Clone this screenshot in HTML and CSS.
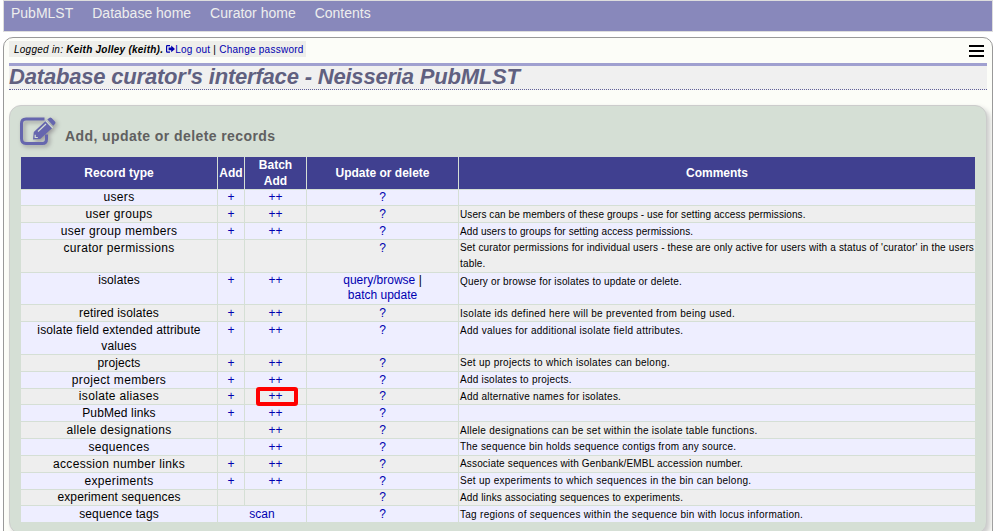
FILE: index.html
```
<!DOCTYPE html>
<html lang="en">
<head>
<meta charset="utf-8">
<title>Database curator's interface</title>
<link rel="stylesheet" href="styles.css">
</head>
<body>
<nav class="nav"><a>PubMLST</a><a>Database home</a><a>Curator home</a><a>Contents</a></nav>
<main class="page">
  <div class="topline">
    <div class="login"><i>Logged in: <b>Keith Jolley (keith).</b></i>
      <a><svg class="exit" viewBox="0 0 9 8"><path d="M4 .7H1.2Q.6.7.6 1.3v5.2q0 .6.6.6H4" fill="none" stroke="#0000b0" stroke-width="1.2"/><path d="M2.6 2.6h2.6V.6L9 3.9 5.2 7.2V5.2H2.6z" fill="#0000b0"/></svg>Log out</a> | <a>Change password</a></div>
    <div class="menu"><span></span><span></span><span></span></div>
  </div>
  <h1>Database curator's interface - Neisseria PubMLST</h1>
  <section class="box">
    <header class="heading">
      <svg class="edit" viewBox="0 0 36 30"><path d="M24.5 2H6Q1.5 2 1.5 6.500v15Q1.500 26.500 6 26.500h16.500Q26.500 26.500 26.500 22v-4.500" fill="none" stroke="#6666ae" stroke-width="3"/><path d="M13 22.500l.8-7.500L26.200 3.600l6.600 6.800L20.200 22z" fill="#6666ae"/><path d="M27.300 2.600L29.200.9q1.200-1 2.400.2l3.300 3.400q1.200 1.300 0 2.500l-1.600 1.700z" fill="#6666ae"/><path d="M25.800 3.900l6.900 7.100M18 14.500l8-7.500M15.200 17.800v2.700h2.600" fill="none" stroke="#d5dfd5" stroke-width="1.200"/></svg>
      <h2>Add, update or delete records</h2>
    </header>
    <table>
      <colgroup><col class="c-type"><col class="c-add"><col class="c-batch"><col class="c-update"><col></colgroup>
      <tr class="head"><th>Record type</th><th>Add</th><th>Batch<br>Add</th><th>Update or delete</th><th>Comments</th></tr>
      <tr class="short"><td>users</td><td><a>+</a></td><td><a>++</a></td><td><a>?</a></td><td></td></tr>
      <tr class="low"><td>user groups</td><td><a>+</a></td><td><a>++</a></td><td><a>?</a></td><td class="s1">Users can be members of these groups - use for setting access permissions.</td></tr>
      <tr class="low"><td>user group members</td><td><a>+</a></td><td><a>++</a></td><td><a>?</a></td><td class="s1">Add users to groups for setting access permissions.</td></tr>
      <tr class="tall"><td>curator permissions</td><td></td><td></td><td><a>?</a></td><td class="s2">Set curator permissions for individual users - these are only active for users with a status of 'curator' in the users<br>table.</td></tr>
      <tr class="medium low"><td class="narrow">isolates</td><td><a>+</a></td><td><a>++</a></td><td><a>query/browse</a> |<br><a>batch update</a></td><td class="s2">Query or browse for isolates to update or delete.</td></tr>
      <tr class="low"><td class="narrow">retired isolates</td><td><a>+</a></td><td><a>++</a></td><td><a>?</a></td><td class="s4">Isolate ids defined here will be prevented from being used.</td></tr>
      <tr class="tall low"><td class="narrow">isolate field extended attribute<br>values</td><td><a>+</a></td><td><a>++</a></td><td><a>?</a></td><td class="s4">Add values for additional isolate field attributes.</td></tr>
      <tr><td class="narrow">projects</td><td><a>+</a></td><td><a>++</a></td><td><a>?</a></td><td class="s4">Set up projects to which isolates can belong.</td></tr>
      <tr><td>project members</td><td><a>+</a></td><td><a>++</a></td><td><a>?</a></td><td class="s3">Add isolates to projects.</td></tr>
      <tr class="short"><td>isolate aliases</td><td><a>+</a></td><td class="marked"><a>++</a></td><td><a>?</a></td><td class="s3">Add alternative names for isolates.</td></tr>
      <tr><td class="narrow">PubMed links</td><td><a>+</a></td><td><a>++</a></td><td><a>?</a></td><td></td></tr>
      <tr class="low"><td>allele designations</td><td></td><td><a>++</a></td><td><a>?</a></td><td class="s4">Allele designations can be set within the isolate table functions.</td></tr>
      <tr><td>sequences</td><td></td><td><a>++</a></td><td><a>?</a></td><td class="s3">The sequence bin holds sequence contigs from any source.</td></tr>
      <tr><td>accession number links</td><td><a>+</a></td><td><a>++</a></td><td><a>?</a></td><td class="s2">Associate sequences with Genbank/EMBL accession number.</td></tr>
      <tr><td>experiments</td><td><a>+</a></td><td><a>++</a></td><td><a>?</a></td><td class="s4">Set up experiments to which sequences in the bin can belong.</td></tr>
      <tr class="short"><td class="narrow">experiment sequences</td><td></td><td></td><td><a>?</a></td><td class="s2">Add links associating sequences to experiments.</td></tr>
      <tr class="low"><td class="narrow">sequence tags</td><td colspan="2"><a>scan</a></td><td><a>?</a></td><td class="s4">Tag regions of sequences within the sequence bin with locus information.</td></tr>
    </table>
  </section>
</main>
</body>
</html>
```
FILE: styles.css
```
* { box-sizing: border-box; }
html { overflow: hidden; }
body { margin: 0 3px; height: 531px; overflow: hidden; background: #fff; color: #000; font-family: "Liberation Sans", Arial, sans-serif; }
a { color: #0000b0; }
.nav { height: 32px; width: 990px; background: #8888bb; border: 1px solid #ddd; padding: 0 7px; display: flex; gap: 19px; font-size: 14px; line-height: 25px; }
.nav a { color: #eee; }
.page { width: 990px; height: 540px; margin-top: 5px; border: 1px solid #999; border-radius: 10px; background: #fcfdf8; padding: 3px 5px; }
.topline { display: flex; justify-content: space-between; height: 22px; }
.login { width: 297px; height: 16px; padding-left: 5px; background: #eeeeea; font-size: 10px; line-height: 18px; letter-spacing: .25px; white-space: nowrap; }
.exit { width: 9px; height: 8px; }
.menu { width: 15px; margin: 4px 3px 0 0; display: flex; flex-direction: column; gap: 3px; }
.menu span { height: 2px; background: #000; }
h1 { margin: 0; height: 27px; border-top: 3px solid #a0a0d0; border-bottom: 1px dotted #606098; background: #f0f0f0; color: #606080; font: italic bold 22px/22px "Liberation Sans", Arial, sans-serif; letter-spacing: -.19px; white-space: nowrap; }
.box { height: 429px; margin-top: 15px; border: 1px solid #ccc; border-radius: 12px; background: #d5dfd5; box-shadow: 3px 3px 5px #ccc; padding: 11px 10px; }
.heading { display: flex; height: 39px; gap: 9px; }
.edit { width: 36px; height: 30px; filter: drop-shadow(2px 2px 2px #999); }
h2 { margin: 10px 0 0; color: #606060; font-size: 14px; line-height: 18px; letter-spacing: .42px; }
table { table-layout: fixed; width: 956px; border-collapse: separate; border-spacing: 1px; font-size: 12px; line-height: 16px; }
.c-type { width: 196px; }
.c-add { width: 26px; }
.c-batch { width: 61px; }
.c-update { width: 151px; }
tr { height: 16px; background: #eee; }
tr:nth-child(even) { background: #eef; }
tr.head { height: 32px; background: #404090; color: #fff; }
tr.short { height: 15px; line-height: 15px; }
tr.medium { height: 31px; line-height: 15px; }
tr.tall { height: 32px; }
th { padding: 0; font-size: 12px; }
td { padding: 0; text-align: center; vertical-align: top; white-space: nowrap; }
td:first-child { letter-spacing: .33px; }
td.narrow:first-child { letter-spacing: .12px; }
td:last-child { text-align: left; font-size: 10px; padding-left: 1px; }
.low td:last-child { padding-top: 2px; line-height: 14px; }
td.s1 { letter-spacing: .08px; }
td.s2 { letter-spacing: .16px; }
td.s3 { letter-spacing: .22px; }
td.s4 { letter-spacing: .28px; }
.marked { position: relative; }
.marked::after { content: ""; position: absolute; box-sizing: border-box; left: 11px; top: -2px; width: 42px; height: 19px; border: 4px solid #f00; border-radius: 3px; }
```
